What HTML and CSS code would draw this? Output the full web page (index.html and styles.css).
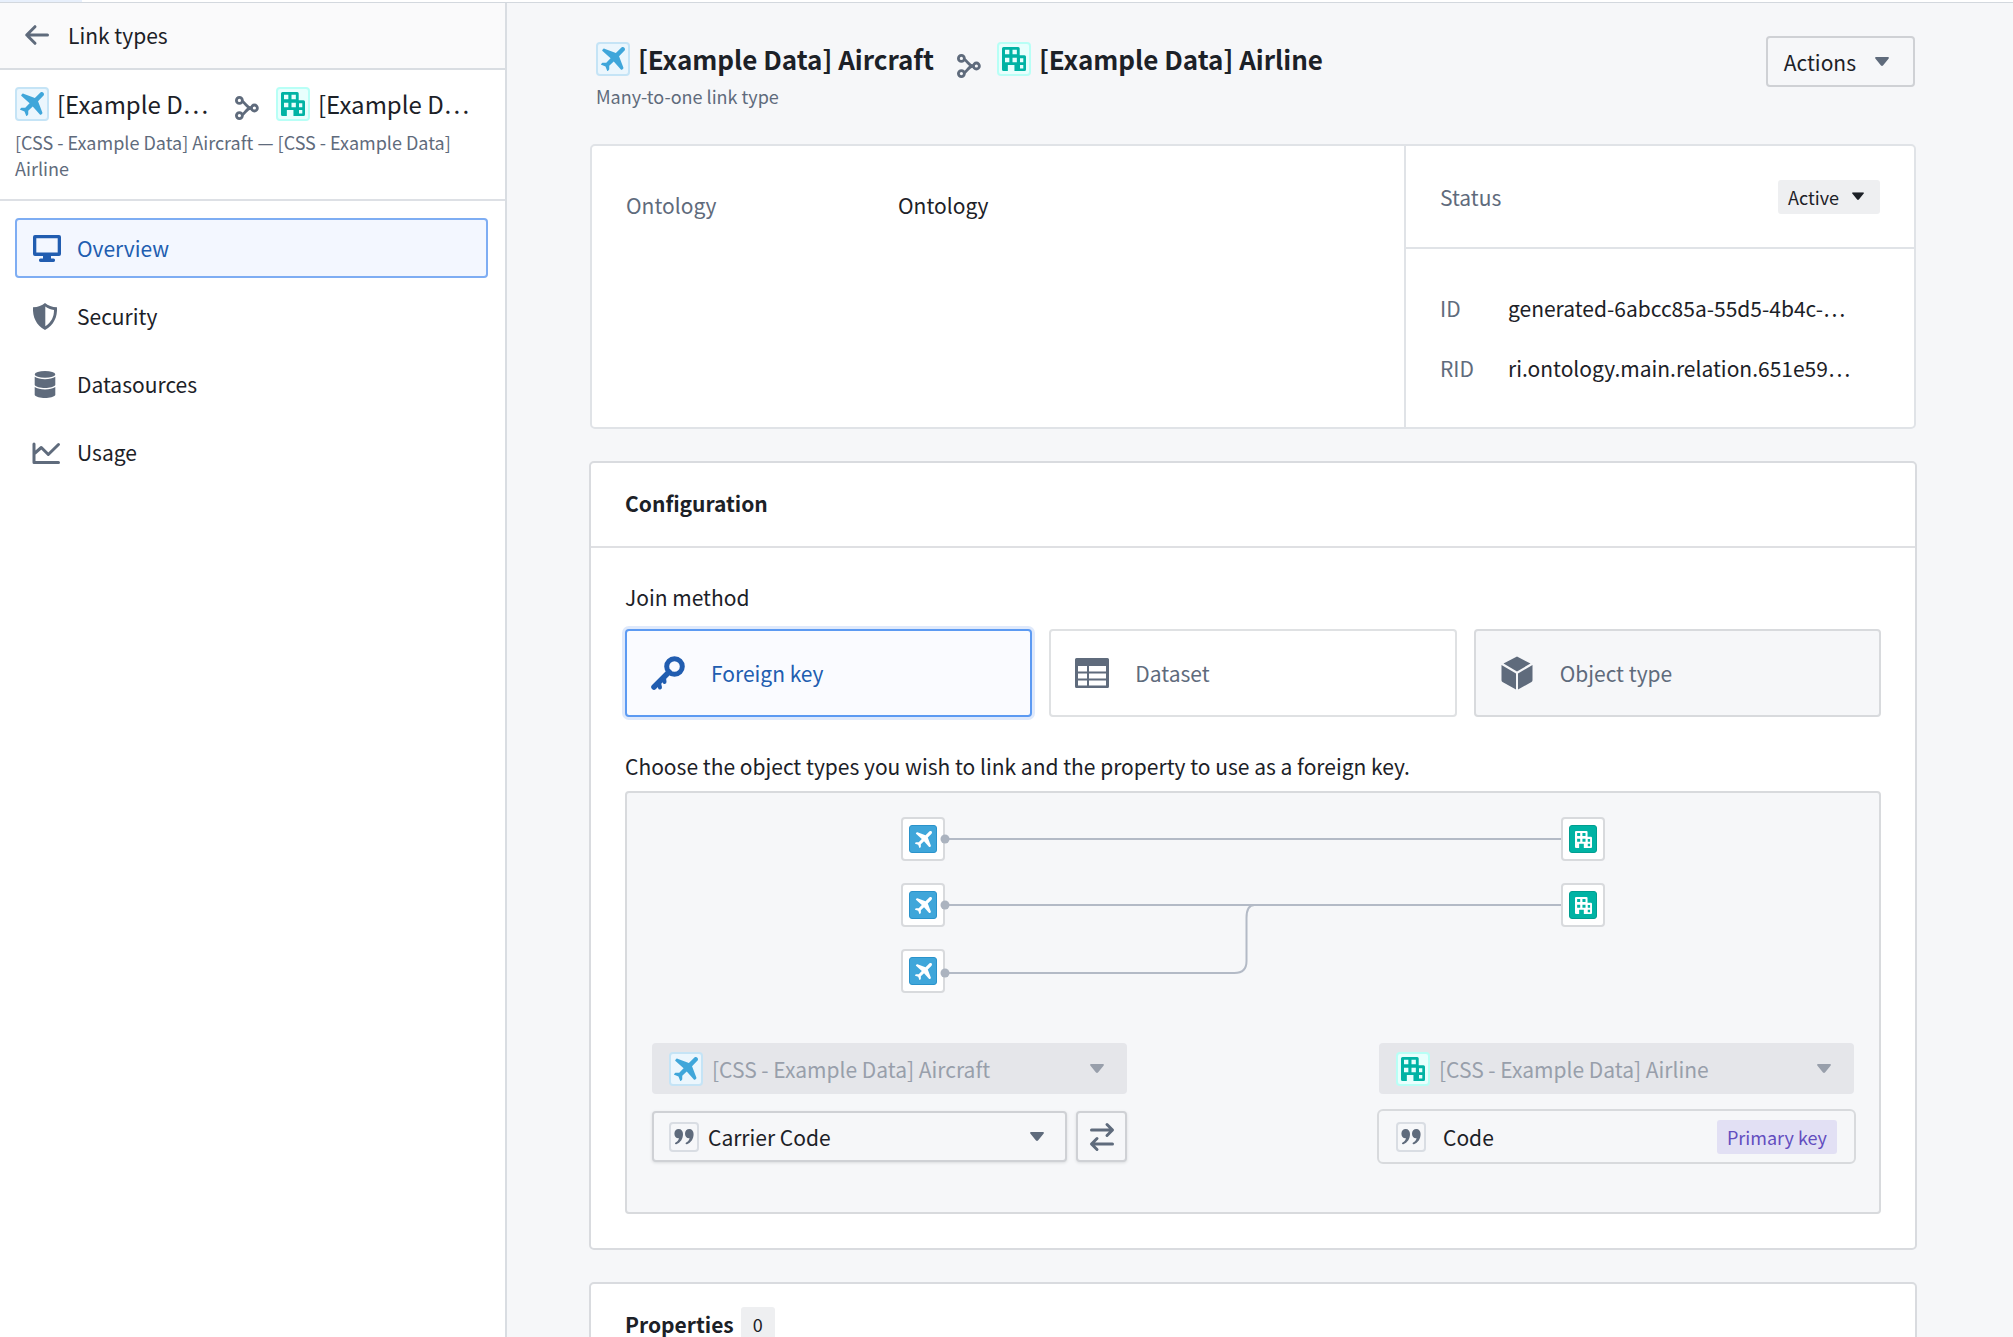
FILE: index.html
```html
<!DOCTYPE html>
<html lang="en">
<head>
<meta charset="utf-8">
<title>Link types - Overview</title>
<link rel="stylesheet" href="styles.css">
</head>
<body>
<svg class="sprite" width="0" height="0" aria-hidden="true">
  <symbol id="plane" viewBox="0 0 16 16"><path fill="currentColor" d="M16 1.5A1.5 1.5 0 0 0 13.44.44L9.91 3.97 2.3 1.1c-.3-.1-.6 0-.8.2L1 1.8c-.3.4-.2.8.2 1.1l5.2 4.6-2.9 3H1.3c-.3 0-.5.1-.7.3l-.5.5c-.2.2-.1.5.1.6L3 13l1.100 2.800c.1.2.4.3.6.1l.5-.5c.2-.2.3-.4.300-.7v-2.200l3-2.900 4.600 5.200c.3.4.7.5 1.100.2l.5-.5c.2-.2.3-.5.200-.8L12.030 6.090l3.530-3.530c.27-.27.44-.64.44-1.060z"/></symbol>
  <symbol id="office" viewBox="0 0 16 16"><path fill="currentColor" fill-rule="evenodd" d="M1 0h9.800a1 1 0 0 1 1 1v4.500H15a1 1 0 0 1 1 1V15a1 1 0 0 1-1 1H8.300v-4H3.900v4H1a1 1 0 0 1-1-1V1a1 1 0 0 1 1-1zM2 1.900v2.900h2.900V1.900zM7 1.900v2.900h2.900V1.900zM2 7.200v2.900h2.900V7.200zM7 7.200v2.900h2.900V7.200zM12 7.500v2.600h2.200V7.500zM12 12v2.300h2.200V12z"/></symbol>
  <symbol id="link" viewBox="0 0 24 24"><g fill="none" stroke="currentColor" stroke-width="2.800"><circle cx="4.400" cy="4.400" r="3"/><circle cx="4.400" cy="19.600" r="3"/><circle cx="19.400" cy="12" r="3"/><path d="M7.200 5.400C10.500 6.500 11.500 12 16.400 12M7.200 18.600C10.500 17.500 11.500 12 16.400 12"/></g></symbol>
  <symbol id="caret" viewBox="0 0 14 10"><path fill="currentColor" d="M1 0h12c.8 0 1.200.8.700 1.400L8 8.500c-.6.6-1.400.6-2 0L.3 1.400C-.2.8.2 0 1 0z"/></symbol>
  <symbol id="quote" viewBox="0 0 20 16"><path fill="currentColor" d="M4.700 0C7.300 0 9 2 9 5c0 5-2.600 8.600-6.600 10.300-1.400.4-1.900-1-.8-1.700C3.400 12.500 4.600 11 5 9.200 2.300 9.500.4 7.600.4 4.700.4 2 2.200 0 4.700 0zM15.300 0c2.600 0 4.300 2 4.300 5 0 5-2.600 8.600-6.600 10.300-1.400.4-1.900-1-.8-1.700 1.800-1.100 3-2.600 3.400-4.400-2.700.3-4.600-1.600-4.600-4.500C11 2 12.800 0 15.300 0z"/></symbol>
</svg>
<div class="topbar"><div class="topbar-tab"></div></div>
<div class="app">
  <aside class="sidebar">
    <a class="back" href="#">
      <svg width="24" height="20" viewBox="0 0 24 20" fill="none" stroke="currentColor" stroke-width="3" stroke-linecap="round" stroke-linejoin="round"><path d="M22.500 10H2M10 1.700 1.700 10l8.300 8.300"/></svg>
      <span>Link types</span>
    </a>
    <div class="summary">
      <div class="summary-title">
        <span class="badge blue"><svg width="24" height="24"><use href="#plane"/></svg></span>
        <span class="summary-name">[Example D…</span>
        <svg class="link-icon" width="24" height="24"><use href="#link"/></svg>
        <span class="badge teal"><svg width="24" height="24"><use href="#office"/></svg></span>
        <span class="summary-name">[Example D…</span>
      </div>
      <p class="summary-text">[CSS - Example Data] Aircraft — [CSS - Example Data] Airline</p>
    </div>
    <nav class="nav">
      <a class="nav-item active" href="#">
        <svg width="28" height="27" viewBox="0 0 28 27"><path fill="currentColor" fill-rule="evenodd" d="M2 0h24a2 2 0 0 1 2 2v17a2 2 0 0 1-2 2h-8v2.500h2.500c2 0 2 3.500 0 3.500h-13c-2 0-2-3.500 0-3.500H10V21H2a2 2 0 0 1-2-2V2a2 2 0 0 1 2-2zM3.300 3.200v14.300h21.400V3.200z"/></svg>
        <span>Overview</span>
      </a>
      <a class="nav-item" href="#">
        <svg width="28" height="27" viewBox="0 0 28 27"><path fill="currentColor" fill-rule="evenodd" d="M12 0c3 2.500 7 4.200 12 4.300C24.500 14 21 22 12 27 3 22-.5 14 0 4.300 5 4.200 9 2.500 12 0zM12.300 3.600v19.700C18.500 19 21 14 21 7c-3.500-.4-6.300-1.500-8.700-3.400z"/></svg>
        <span>Security</span>
      </a>
      <a class="nav-item" href="#">
        <svg width="28" height="27" viewBox="0 0 28 27" fill="currentColor"><ellipse cx="12" cy="3.400" rx="10.300" ry="3.400"/><path d="M1.700 5.800C6 8.900 18 8.900 22.300 5.800V14C20 18 4 18 1.700 14zM1.700 16.100C6 19.200 18 19.200 22.300 16.100V24c-2.300 4-18.300 4-20.600 0z"/></svg>
        <span>Datasources</span>
      </a>
      <a class="nav-item" href="#">
        <svg width="28" height="27" viewBox="0 0 28 27" fill="none" stroke="currentColor" stroke-width="3" stroke-linecap="round" stroke-linejoin="round"><path d="M1 5v18.500h24.500M2 14l6.300-5.500 7 7L25.500 5.500"/></svg>
        <span>Usage</span>
      </a>
    </nav>
  </aside>
  <main class="main">
    <header class="page-head">
      <div>
        <h1 class="page-title">
          <span class="badge blue"><svg width="24" height="24"><use href="#plane"/></svg></span>
          <span>[Example Data] Aircraft</span>
          <svg class="link-icon" width="24" height="24"><use href="#link"/></svg>
          <span class="badge teal"><svg width="24" height="24"><use href="#office"/></svg></span>
          <span>[Example Data] Airline</span>
        </h1>
        <p class="page-sub">Many-to-one link type</p>
      </div>
      <button class="actions" type="button">Actions <svg width="14" height="10"><use href="#caret"/></svg></button>
    </header>

    <section class="card info">
      <dl class="info-main"><dt>Ontology</dt><dd>Ontology</dd></dl>
      <div class="info-side">
        <div class="status">
          <span>Status</span>
          <button class="status-tag" type="button">Active <svg width="12" height="9" viewBox="0 0 14 10"><use href="#caret"/></svg></button>
        </div>
        <dl class="ids">
          <dt>ID</dt><dd>generated-6abcc85a-55d5-4b4c-…</dd>
          <dt>RID</dt><dd>ri.ontology.main.relation.651e59…</dd>
        </dl>
      </div>
    </section>

    <section class="card">
      <h2 class="card-head">Configuration</h2>
      <div class="card-body">
        <p class="label">Join method</p>
        <div class="methods">
          <button class="method selected" type="button" aria-pressed="true">
            <svg width="34" height="34" viewBox="0 0 34 34"><g fill="none" stroke="currentColor"><circle cx="23.500" cy="10.500" r="7.800" stroke-width="5"/><path d="M18 16 3 31" stroke-width="5.500" stroke-linecap="round"/><path d="m13 22 .5 4M8 27l1 4.500" stroke-width="4" stroke-linecap="round"/></g></svg>
            <span>Foreign key</span>
          </button>
          <button class="method" type="button" aria-pressed="false">
            <svg width="34" height="34" viewBox="0 0 34 34"><path fill="currentColor" fill-rule="evenodd" d="M1.500 2h31A1.500 1.500 0 0 1 34 3.500v27a1.500 1.500 0 0 1-1.500 1.500h-31A1.500 1.500 0 0 1 0 30.500v-27A1.500 1.500 0 0 1 1.500 2zM3 10v5.500h9V10zM14 10v5.500h17V10zM3 17.500v5h9v-5zM14 17.500v5h17v-5zM3 24.500v5h9v-5zM14 24.500v5h17v-5z"/></svg>
            <span>Dataset</span>
          </button>
          <button class="method" type="button" disabled>
            <svg width="34" height="34" viewBox="0 0 34 34" fill="currentColor"><path d="m17 .5 13.500 7L17 15.500 3.500 7.500zM1.500 9l14.500 8.500V33.500L2.500 26a2 2 0 0 1-1-1.700zM32.500 9v15.300a2 2 0 0 1-1 1.700L18 33.500v-16z"/></svg>
            <span>Object type</span>
          </button>
        </div>
        <p class="label hint">Choose the object types you wish to link and the property to use as a foreign key.</p>
        <div class="panel">
          <div class="diagram">
            <div class="nodes">
              <span class="node"><span class="tile tile-blue"><svg width="17" height="17"><use href="#plane"/></svg></span></span>
              <span class="node"><span class="tile tile-blue"><svg width="17" height="17"><use href="#plane"/></svg></span></span>
              <span class="node"><span class="tile tile-blue"><svg width="17" height="17"><use href="#plane"/></svg></span></span>
            </div>
            <svg class="wires" viewBox="0 0 617 176" preserveAspectRatio="none">
              <path d="M0 22H617M0 88H617M0 156H290Q302 156 302 144V101Q302 88 310 88"/>
              <circle cx="0" cy="22" r="4.500"/><circle cx="0" cy="88" r="4.500"/><circle cx="0" cy="156" r="4.500"/>
            </svg>
            <div class="nodes">
              <span class="node"><span class="tile tile-teal"><svg width="17" height="17"><use href="#office"/></svg></span></span>
              <span class="node"><span class="tile tile-teal"><svg width="17" height="17"><use href="#office"/></svg></span></span>
            </div>
          </div>
          <div class="sides">
            <div class="side">
              <div class="field">
                <span class="badge blue"><svg width="24" height="24"><use href="#plane"/></svg></span>
                <select aria-label="First object type" disabled><option>[CSS - Example Data] Aircraft</option></select>
                <svg class="field-caret" width="14" height="10"><use href="#caret"/></svg>
              </div>
              <div class="row">
                <div class="field raised">
                  <span class="type-icon"><svg width="20" height="16"><use href="#quote"/></svg></span>
                  <select aria-label="Foreign key property"><option>Carrier Code</option></select>
                  <svg class="field-caret" width="14" height="10"><use href="#caret"/></svg>
                </div>
                <button class="swap" type="button" aria-label="Swap sides">
                  <svg width="24" height="28" viewBox="0 0 24 28" fill="none" stroke="currentColor" stroke-width="3" stroke-linecap="round" stroke-linejoin="round"><path d="M1.500 7H22M17 1.500 22.500 7 17 12.500M22.500 21H2M7 15.500 1.500 21 7 26.500"/></svg>
                </button>
              </div>
            </div>
            <div class="side">
              <div class="field">
                <span class="badge teal"><svg width="24" height="24"><use href="#office"/></svg></span>
                <select aria-label="Second object type" disabled><option>[CSS - Example Data] Airline</option></select>
                <svg class="field-caret" width="14" height="10"><use href="#caret"/></svg>
              </div>
              <div class="keybox">
                <span class="type-icon"><svg width="20" height="16"><use href="#quote"/></svg></span>
                <span class="keybox-name">Code</span>
                <span class="key-tag">Primary key</span>
              </div>
            </div>
          </div>
        </div>
      </div>
    </section>

    <section class="card">
      <h2 class="card-head">Properties <span class="count">0</span></h2>
    </section>
  </main>
</div>
</body>
</html>
```
FILE: styles.css
```css
* { box-sizing: border-box; }

body {
  margin: 0;
  height: 100vh;
  display: flex;
  flex-direction: column;
  overflow: hidden;
  background: #f6f7f9;
  color: #1c2127;
  font-family: "Noto Sans CJK SC", "Noto Sans", sans-serif;
  font-size: 21px;
  line-height: 30px;
}

h1, h2, p, dl, dd { margin: 0; }
a { color: inherit; text-decoration: none; }
button, select { font: inherit; color: inherit; margin: 0; }
svg { display: block; flex: none; overflow: visible; }
.sprite { position: absolute; }

.topbar {
  flex: none;
  height: 3px;
  background: #ffffff;
  border-bottom: 1px solid #d3d8de;
}
.topbar-tab {
  width: 82px;
  height: 2px;
  background: #e8f0fc;
}

.app { flex: 1; display: flex; min-height: 0; }

/* Sidebar */
.sidebar {
  flex: none;
  width: 507px;
  background: #ffffff;
  border-right: 2px solid #d9dde2;
}
.back {
  display: flex;
  align-items: center;
  gap: 19px;
  height: 67px;
  padding: 0 25px 2px;
  background: #fafafb;
  border-bottom: 2px solid #d9dde2;
}
.back svg, .link-icon { color: #5f6b7c; }
.summary {
  padding: 16px 15px 18px;
  border-bottom: 2px solid #dde0e5;
}
.summary-title {
  display: flex;
  align-items: center;
  gap: 8px;
  font-size: 24px;
  line-height: 36px;
}
.summary-name { width: 170px; white-space: nowrap; }
.summary-title .link-icon { margin: 7px 9px 0 0; }
.summary-text {
  margin-top: 7px;
  color: #5f6b7c;
  font-size: 18px;
  line-height: 26px;
}

.badge {
  flex: none;
  display: flex;
  align-items: center;
  justify-content: center;
  width: 34px;
  height: 34px;
  border: 2px solid;
  border-radius: 4px;
}
.blue { color: #3fa6da; background: #ebf6fd; border-color: #c5e4f6; }
.teal { color: #00b3a4; background: #e8fffd; border-color: #b8fff6; }

.nav {
  display: flex;
  flex-direction: column;
  gap: 8px;
  padding: 17px 17px 17px 15px;
}
.nav-item {
  display: flex;
  align-items: center;
  gap: 16px;
  height: 60px;
  padding: 0 16px;
  border: 2px solid transparent;
  border-radius: 4px;
}
.nav-item svg { color: #5f6b7c; }
.active { background: #f3f7ff; border-color: #7eadf3; color: #215db0; }
.active svg { color: #215db0; }

/* Page header */
.main {
  flex: 1;
  min-width: 0;
  padding: 33px 96px 0 82px;
  overflow: hidden;
}
.page-head {
  display: flex;
  justify-content: space-between;
  align-items: flex-start;
  padding: 0 2px 0 7px;
}
.page-title {
  display: flex;
  align-items: center;
  gap: 8px;
  margin-top: 4px;
  font-size: 26px;
  line-height: 36px;
  font-weight: 700;
}
.page-title .link-icon { margin: 14px 8px 0 15px; }
.page-sub {
  margin-top: 5px;
  color: #5f6b7c;
  font-size: 18px;
  line-height: 26px;
}
.actions {
  display: flex;
  align-items: center;
  gap: 19px;
  height: 51px;
  padding: 0 24px 0 16px;
  background: transparent;
  border: 2px solid #cfd1d5;
  border-radius: 4px;
}
.actions svg { color: #5f6b7c; }

/* Cards */
.card {
  margin-top: 32px;
  background: #ffffff;
  border: 2px solid #d9dbdf;
  border-radius: 5px;
}
.card-head {
  display: flex;
  align-items: center;
  gap: 7px;
  height: 85px;
  padding: 0 34px 3px;
  border-bottom: 2px solid #dfe0e3;
  font-size: 21px;
  line-height: 30px;
  font-weight: 700;
}
.count {
  padding: 2px 12px;
  background: #eeeff1;
  border-radius: 3px;
  font-size: 18px;
  font-weight: 400;
}

.info {
  display: flex;
  height: 285px;
  margin: 35px 1px 0;
  border-color: #e0e3e7;
}
.info dt, .status { color: #5f6b7c; }
.info-main {
  flex: 1;
  display: flex;
  padding: 44px 34px;
}
.info-main dt { width: 272px; }
.info-side {
  width: 510px;
  border-left: 2px solid #e0e3e7;
}
.status {
  display: flex;
  align-items: center;
  justify-content: space-between;
  height: 103px;
  padding: 0 34px;
  border-bottom: 2px solid #e0e3e7;
}
.status-tag {
  display: flex;
  align-items: center;
  gap: 13px;
  height: 34px;
  padding: 0 16px 0 10px;
  color: #1c2127;
  background: #eeeff1;
  border: 0;
  border-radius: 3px;
  font-size: 18px;
}
.ids {
  display: grid;
  grid-template-columns: 68px 1fr;
  row-gap: 30px;
  padding: 44px 34px;
  white-space: nowrap;
}

.card-body { padding: 34px; }
.label { margin-bottom: 17px; }
.methods {
  display: grid;
  grid-template-columns: repeat(3, 1fr);
  gap: 17px;
}
.method {
  display: flex;
  align-items: center;
  gap: 26px;
  height: 88px;
  padding: 0 24px;
  color: #5f6b7c;
  background: #ffffff;
  border: 2px solid #dfe1e3;
  border-radius: 4px;
}
.method:disabled { background: #f6f7f9; border-color: #d8dadd; }
.selected {
  color: #215db0;
  background: #fafbff;
  border-color: #5c9af2;
  box-shadow: 0 0 0 3px #dfe9fb;
}
.hint { margin: 34px 0 10px; }

.panel {
  padding: 24px 25px 50px;
  background: #f6f7f9;
  border: 2px solid #d8dadd;
  border-radius: 4px;
}
.diagram {
  display: grid;
  grid-template-columns: 44px 1fr 44px;
  margin: 0 249px;
}
.nodes { display: flex; flex-direction: column; gap: 22px; }
.node {
  display: flex;
  align-items: center;
  justify-content: center;
  height: 44px;
  background: #ffffff;
  border: 2px solid #d8dadd;
  border-radius: 4px;
}
.tile {
  display: flex;
  align-items: center;
  justify-content: center;
  width: 28px;
  height: 28px;
  color: #ffffff;
  border: 1px solid;
  border-radius: 3px;
}
.tile-blue { background: #3fa6da; border-color: #2a93cb; }
.tile-teal { background: #00b3a4; border-color: #009e90; }
.wires {
  position: relative;
  width: 100%;
  height: 176px;
  fill: none;
  stroke: #b3bac6;
  stroke-width: 2;
}
.wires circle { fill: #abb3bf; stroke: none; }

.sides {
  display: flex;
  justify-content: space-between;
  margin-top: 50px;
}
.side {
  display: flex;
  flex-direction: column;
  gap: 17px;
  width: 475px;
}
.row { display: flex; gap: 9px; }
.field {
  display: grid;
  align-items: center;
  flex: 1;
}
.field > * { grid-area: 1 / 1; }
.field .badge, .field .type-icon, .field-caret { z-index: 1; margin-left: 17px; pointer-events: none; }
.field-caret { justify-self: end; margin-right: 23px; color: #5f6b7c; }
.field select {
  appearance: none;
  width: 100%;
  height: 51px;
  padding: 0 51px 0 60px;
  background: #f6f7f9;
  border: 0;
  border-radius: 4px;
}
.field select:disabled { color: #989fab; background: #e5e6ea; opacity: 1; }
.field select:disabled + .field-caret { color: #989fab; }
.raised select { padding-left: 54px; }
.raised select, .swap {
  border: 2px solid #cfd1d5;
  box-shadow: 0 1px 3px #d9dbde;
}
.swap {
  display: flex;
  align-items: center;
  justify-content: center;
  width: 51px;
  height: 51px;
  padding: 0;
  color: #5f6b7c;
  background: #f6f7f9;
  border-radius: 4px;
}
.type-icon {
  flex: none;
  display: flex;
  align-items: center;
  justify-content: center;
  width: 30px;
  height: 30px;
  color: #5f6b7c;
  border: 2px solid #d9dde3;
  border-radius: 4px;
}
.keybox {
  display: flex;
  align-items: center;
  gap: 17px;
  height: 51px;
  padding: 0 17px;
  outline: 2px solid #d8dadd;
  border-radius: 4px;
}
.keybox-name { flex: 1; }
.key-tag {
  padding: 2px 10px;
  color: #634dbf;
  background: #e2e0f4;
  border-radius: 3px;
  font-size: 18px;
}
```
